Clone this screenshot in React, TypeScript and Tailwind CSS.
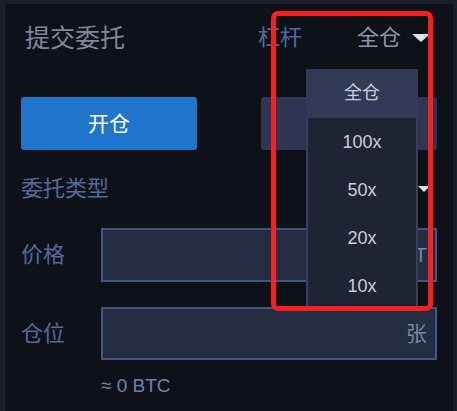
import React from "react";

const font = { fontFamily: '"Liberation Sans", "Noto Sans CJK SC", sans-serif' };

function Tri({ w, h, color }: { w: number; h: number; color: string }) {
  return (
    <svg width={w} height={h} viewBox={`0 0 ${w} ${h}`}>
      <polygon points={`0,0 ${w},0 ${w / 2},${h}`} fill={color} />
    </svg>
  );
}

export default function App() {
  return (
    <div className="w-[457px] h-[411px] overflow-hidden bg-[#1b1e29] pl-[5px] pr-[4px] pt-[4px]" style={font}>
      <div className="relative h-[407px] bg-[#0f1119] px-[16px]">
        {/* header */}
        <div className="flex h-[68px] items-center">
          <div className="ml-[4px] text-[25px] text-[#7f8799] leading-none">提交委托</div>
          <div className="ml-auto flex items-center">
            <span className="text-[22px] leading-none text-[#4f6d9c]">杠杆</span>
            <span className="ml-[55px] text-[22px] leading-none text-[#8f95a2]">全仓</span>
            <span className="ml-[11px] mr-[7px] flex items-center">
              <Tri w={18} h={8} color="#dfe3ea" />
            </span>
          </div>
        </div>

        {/* buttons */}
        <div className="mt-[25px] flex justify-between">
          <button className="h-[53px] w-[176px] rounded-[3px] bg-[#1f75cc] text-[21px] text-white">开仓</button>
          <button className="h-[53px] w-[176px] rounded-[3px] bg-[#2e3653] text-[21px] text-[#c8ccd4]">平仓</button>
        </div>

        {/* order type */}
        <div className="mt-[19px] flex h-[40px] items-center">
          <span className="text-[22px] leading-none text-[#4f6d9c]">委托类型</span>
          <span className="ml-auto mr-[7px] flex items-center">
            <Tri w={12} h={6} color="#dfe3ea" />
          </span>
        </div>

        {/* price */}
        <div className="mt-[19px] flex h-[54px] items-center">
          <span className="w-[80px] text-[22px] leading-none text-[#4f6d9c]">价格</span>
          <div className="flex h-full flex-1 items-center justify-end border-2 border-[#3f5782] bg-[#232c40] pr-[8px]">
            <span className="text-[20px] text-[#7487a6]">USDT</span>
          </div>
        </div>

        {/* position */}
        <div className="mt-[25px] flex h-[53px] items-center">
          <span className="w-[80px] text-[22px] leading-none text-[#4f6d9c]">仓位</span>
          <div className="flex h-full flex-1 items-center justify-end border-2 border-[#3f5782] bg-[#232c40] pr-[8px]">
            <span className="text-[21px] text-[#7487a6]">张</span>
          </div>
        </div>

        <div className="ml-[80px] mt-[15px] text-[19px] leading-[22px] text-[#6b84ab]">≈ 0 BTC</div>

        {/* dropdown */}
        <div className="absolute left-[301px] top-[65px] w-[112px] bg-[#323a56]">
          <div className="flex h-[49px] items-center justify-center text-[18px] text-[#c9ced6]">全仓</div>
          <div className="mx-[1px] border-x border-[#3a4362] bg-[#1f2435]">
            {["100x", "50x", "20x", "10x"].map((t) => (
              <div key={t} className="flex h-[48px] items-center justify-center text-[18px] text-[#c9ced6]">
                {t}
              </div>
            ))}
          </div>
        </div>

        {/* red highlight */}
        <div className="pointer-events-none absolute left-[266px] top-[7px] h-[300px] w-[162px] rounded-[7px] border-[5px] border-[#fb1e1e]" />
      </div>
    </div>
  );
}
